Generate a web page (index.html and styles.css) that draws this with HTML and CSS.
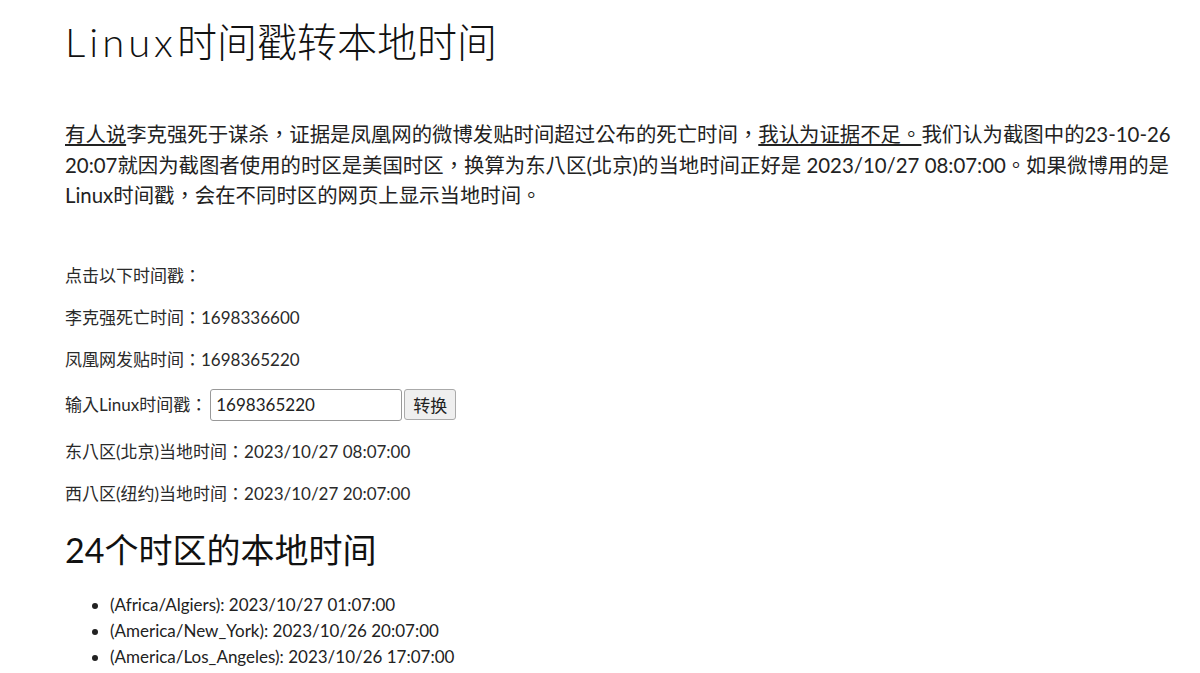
FILE: index.html
```html
<!DOCTYPE html>
<html lang="zh-TW">

<head>
    <meta charset="UTF-8">
    <meta name="viewport" content="width=device-width, initial-scale=1.0">
    <title>Linux时间戳转本地时间</title>
    <link rel="stylesheet" href="styles.css">
</head>

<body>
    <div class="page">
        <h1><span class="latin">Linux</span>时间戳转本地时间</h1>

        <p class="intro"><a href="#">有人说</a>李克强死于谋杀，证据是凤凰网的微博发贴时间超过公布的死亡时间，<a href="#">我认为证据不足。</a>我们认为截图中的23-10-26 20:07就因为截图者使用的时区是美国时区，换算为东八区(北京)的当地时间正好是 2023/10/27 08:07:00。如果微博用的是Linux时间戳，会在不同时区的网页上显示当地时间。</p>

        <div class="tool">
            <p>点击以下时间戳：</p>
            <p>李克强死亡时间：1698336600</p>
            <p>凤凰网发贴时间：1698365220</p>
            <p class="row">
                <label for="ts">输入Linux时间戳：</label>
                <input type="text" id="ts" value="1698365220">
                <button type="button">转换</button>
            </p>
            <p>东八区(北京)当地时间：2023/10/27 08:07:00</p>
            <p>西八区(纽约)当地时间：2023/10/27 20:07:00</p>
        </div>

        <h2>24个时区的本地时间</h2>
        <ul class="zones">
            <li>(Africa/Algiers): 2023/10/27 01:07:00</li>
            <li>(America/New_York): 2023/10/26 20:07:00</li>
            <li>(America/Los_Angeles): 2023/10/26 17:07:00</li>
        </ul>
    </div>
</body>

</html>
```

FILE: styles.css
```css
body {
    margin: 0;
    font-family: Lato, "Noto Sans CJK TC", sans-serif;
    color: #222;
    background: #fff;
}

.page {
    padding: 0 18px 0 65px;
}

h1 {
    margin: 0;
    padding-top: 16px;
    font-size: 40px;
    font-weight: 300;
    line-height: 52px;
    color: #111;
}

h1 .latin {
    letter-spacing: 4px;
}

.intro {
    margin: 51px 0 0;
    font-size: 20.4px;
    line-height: 30.5px;
}

.intro a {
    color: #222;
    text-decoration: underline;
}

.tool {
    margin-top: 55px;
    font-size: 17px;
    color: #2a2a2a;
}

.tool p {
    margin: 0 0 22px;
    line-height: 20px;
}

.tool .row {
    display: flex;
    align-items: center;
    height: 32px;
    margin: -3px 0 21px;
}

.row input {
    width: 192px;
    height: 32px;
    box-sizing: border-box;
    padding: 0 5px;
    margin: 0 2px 0 3px;
    font-family: Lato, "Noto Sans CJK TC", sans-serif;
    font-size: 17px;
    color: #222;
    border: 1px solid #999;
    border-radius: 3px;
}

.row button {
    height: 31px;
    padding: 0 8px;
    font-family: Lato, "Noto Sans CJK TC", sans-serif;
    font-size: 17px;
    color: #222;
    background: #efefef;
    border: 1px solid #aaa;
    border-radius: 3px;
}

.tool p:last-child {
    margin-bottom: 0;
}

h2 {
    margin: 24px 0 0;
    font-size: 34px;
    font-weight: 400;
    line-height: 44px;
    color: #111;
}

.zones {
    margin: 20px 0 0;
    padding-left: 45px;
    font-size: 17px;
    line-height: 26px;
}
```
